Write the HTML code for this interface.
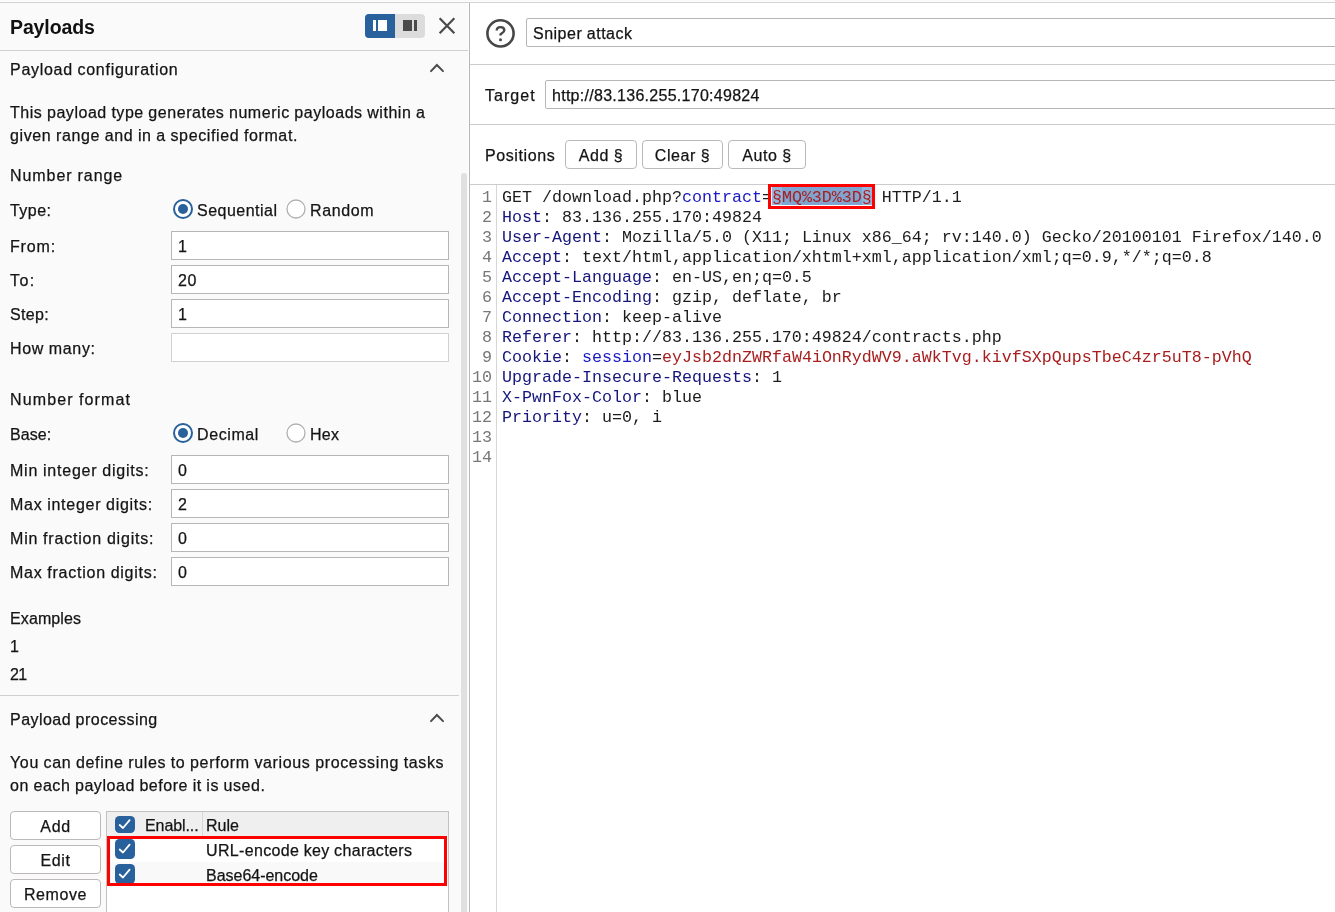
<!DOCTYPE html>
<html><head><meta charset="utf-8">
<style>
*{box-sizing:border-box;margin:0;padding:0}
html,body{width:1335px;height:912px;overflow:hidden;background:#fafafa}
body{position:relative;font-family:"Liberation Sans",sans-serif;font-size:16px;color:#141414}
.t{-webkit-text-stroke:0.25px currentColor}
#root{position:absolute;left:0;top:0;width:1335px;height:912px;will-change:transform}
.a{position:absolute;white-space:pre;line-height:18px}
.t{word-spacing:-0.4px}
.hl{position:absolute;height:1px;background:#cccccc}
.vl{position:absolute;width:1px;background:#cccccc}
.inp{position:absolute;background:#fff;border:1px solid #b9b5b5;border-radius:2px}
.btn{position:absolute;background:#fff;border:1px solid #bdb9b9;border-radius:4px}
.mono{font-family:"Liberation Mono",monospace;font-size:16.67px;line-height:20px}
.k{color:#15157d}
.p{color:#1818c4}
.r{color:#a81e1e}
.ln{position:absolute;left:470px;width:22px;text-align:right;color:#777}
</style></head><body><div id="root">
<div class="hl" style="left:0;top:1px;width:1335px;background:#fdfdfd"></div>
<div class="hl" style="left:0;top:2px;width:1335px;background:#cfd3d3"></div>
<div class="a" style="left:0;top:3px;width:469px;height:909px;background:#fafafa"></div>
<div id="payloads" class="a t" style="left:10px;top:18px;letter-spacing:-0.114px;font-size:19.5px;font-weight:bold;color:#111;-webkit-text-stroke:0">Payloads</div>
<div class="a" style="left:365px;top:14px;width:60px;height:24px;border-radius:4px;background:#dcdcdc;overflow:hidden">
  <div class="a" style="left:0;top:0;width:30px;height:24px;background:#28619b"></div>
  <div class="a" style="left:8px;top:6px;width:3px;height:11px;background:#fff"></div>
  <div class="a" style="left:12.5px;top:6px;width:9.5px;height:11px;background:#fff"></div>
  <div class="a" style="left:38px;top:6px;width:9px;height:11px;background:#4a4a4a"></div>
  <div class="a" style="left:49px;top:6px;width:3px;height:11px;background:#4a4a4a"></div>
</div>
<svg class="a" style="left:437px;top:16px" width="20" height="20" viewBox="0 0 20 20"><path d="M3.4 3 L16.6 16.4 M16.6 3 L3.4 16.4" stroke="#4a4a4a" stroke-width="2.2" stroke-linecap="square"/></svg>
<div class="hl" style="left:0;top:50px;width:469px;background:#cfcfcf"></div>
<div class="a" style="left:468px;top:3px;width:1px;height:909px;background:#fff"></div>
<div class="a" style="left:461px;top:173px;width:6px;height:739px;border-radius:3px 3px 0 0;background:#e0e0e0"></div>
<div id="cfg" class="a t" style="left:10px;top:60.5px;letter-spacing:0.71px;">Payload configuration</div>
<svg class="a" style="left:426px;top:60px" width="20" height="14" viewBox="0 0 20 14"><path d="M5 11.1 L10.9 5 L17 11.1" fill="none" stroke="#4a4a4a" stroke-width="2" stroke-linecap="round"/></svg>
<div id="para1" class="a t" style="left:10px;top:103.5px;letter-spacing:0.54px;">This payload type generates numeric payloads within a</div>
<div id="para2" class="a t" style="left:10px;top:126.5px;letter-spacing:0.621px;">given range and in a specified format.</div>
<div id="nrange" class="a t" style="left:10px;top:166.5px;letter-spacing:0.944px;">Number range</div>
<div id="type" class="a t" style="left:10px;top:201.5px;letter-spacing:0.45px;">Type:</div>
<svg class="a" style="left:172px;top:198px" width="22" height="22" viewBox="0 0 22 22"><circle cx="11" cy="11" r="9" fill="#fff" stroke="#28619b" stroke-width="2"/><circle cx="11" cy="11" r="5" fill="#28619b"/></svg>
<div id="seq" class="a t" style="left:197px;top:201.5px;letter-spacing:0.489px;">Sequential</div>
<svg class="a" style="left:285px;top:198px" width="22" height="22" viewBox="0 0 22 22"><circle cx="11" cy="11" r="9" fill="#fff" stroke="#b0b0b0" stroke-width="1.3"/></svg>
<div id="rand" class="a t" style="left:310px;top:201.5px;letter-spacing:0.6px;">Random</div>
<div id="from" class="a t" style="left:10px;top:237.5px;letter-spacing:0.85px;">From:</div>
<div class="inp" style="left:171px;top:231px;width:278px;height:29px;border-radius:0.5px;"></div>
<div id="from_v" class="a t" style="left:178px;top:237.5px;letter-spacing:0.6px;">1</div>
<div id="to" class="a t" style="left:10px;top:271.5px;letter-spacing:1.4px;">To:</div>
<div class="inp" style="left:171px;top:265px;width:278px;height:29px;border-radius:0.5px;"></div>
<div id="to_v" class="a t" style="left:178px;top:271.5px;letter-spacing:0.6px;">20</div>
<div id="step" class="a t" style="left:10px;top:305.5px;letter-spacing:0.35px;">Step:</div>
<div class="inp" style="left:171px;top:299px;width:278px;height:29px;border-radius:0.5px;"></div>
<div id="step_v" class="a t" style="left:178px;top:305.5px;letter-spacing:0.6px;">1</div>
<div id="howmany" class="a t" style="left:10px;top:339.5px;letter-spacing:0.672px;">How many:</div>
<div class="inp" style="left:171px;top:333px;width:278px;height:29px;border-radius:0.5px;border-color:#d4d0d0"></div>
<div id="nformat" class="a t" style="left:10px;top:390.5px;letter-spacing:1.132px;">Number format</div>
<div id="base" class="a t" style="left:10px;top:425.5px;letter-spacing:0.1px;">Base:</div>
<svg class="a" style="left:172px;top:422px" width="22" height="22" viewBox="0 0 22 22"><circle cx="11" cy="11" r="9" fill="#fff" stroke="#28619b" stroke-width="2"/><circle cx="11" cy="11" r="5" fill="#28619b"/></svg>
<div id="dec" class="a t" style="left:197px;top:425.5px;letter-spacing:0.6px;">Decimal</div>
<svg class="a" style="left:285px;top:422px" width="22" height="22" viewBox="0 0 22 22"><circle cx="11" cy="11" r="9" fill="#fff" stroke="#b0b0b0" stroke-width="1.3"/></svg>
<div id="hex" class="a t" style="left:310px;top:425.5px;letter-spacing:0.3px;">Hex</div>
<div id="minint" class="a t" style="left:10px;top:461.5px;letter-spacing:0.789px;">Min integer digits:</div>
<div class="inp" style="left:171px;top:455px;width:278px;height:29px;border-radius:0.5px;"></div>
<div id="minint_v" class="a t" style="left:178px;top:461.5px;letter-spacing:0.6px;">0</div>
<div id="maxint" class="a t" style="left:10px;top:495.5px;letter-spacing:0.731px;">Max integer digits:</div>
<div class="inp" style="left:171px;top:489px;width:278px;height:29px;border-radius:0.5px;"></div>
<div id="maxint_v" class="a t" style="left:178px;top:495.5px;letter-spacing:0.6px;">2</div>
<div id="minfr" class="a t" style="left:10px;top:529.5px;letter-spacing:0.811px;">Min fraction digits:</div>
<div class="inp" style="left:171px;top:523px;width:278px;height:29px;border-radius:0.5px;"></div>
<div id="minfr_v" class="a t" style="left:178px;top:529.5px;letter-spacing:0.6px;">0</div>
<div id="maxfr" class="a t" style="left:10px;top:563.5px;letter-spacing:0.758px;">Max fraction digits:</div>
<div class="inp" style="left:171px;top:557px;width:278px;height:29px;border-radius:0.5px;"></div>
<div id="maxfr_v" class="a t" style="left:178px;top:563.5px;letter-spacing:0.6px;">0</div>
<div id="examples" class="a t" style="left:10px;top:609.5px;letter-spacing:0.113px;">Examples</div>
<div id="ex1" class="a t" style="left:10px;top:637.5px;letter-spacing:0.6px;">1</div>
<div id="ex2" class="a t" style="left:10px;top:665.5px;letter-spacing:-0.6px;">21</div>
<div class="hl" style="left:0;top:695px;width:459px;background:#d0d0d0"></div>
<div id="proc" class="a t" style="left:10px;top:710.5px;letter-spacing:0.469px;">Payload processing</div>
<svg class="a" style="left:426px;top:710.3px" width="20" height="14" viewBox="0 0 20 14"><path d="M5 11.1 L10.9 5 L17 11.1" fill="none" stroke="#4a4a4a" stroke-width="2" stroke-linecap="round"/></svg>
<div id="para3" class="a t" style="left:10px;top:754px;letter-spacing:0.643px;">You can define rules to perform various processing tasks</div>
<div id="para4" class="a t" style="left:10px;top:777px;letter-spacing:0.546px;">on each payload before it is used.</div>
<div class="btn" style="left:10px;top:811px;width:91px;height:29px"></div>
<div id="badd" class="a t" style="left:10px;top:817.5px;letter-spacing:0.6px;width:91px;text-align:center">Add</div>
<div class="btn" style="left:10px;top:845px;width:91px;height:29px"></div>
<div id="bedit" class="a t" style="left:10px;top:851.5px;letter-spacing:0.6px;width:91px;text-align:center">Edit</div>
<div class="btn" style="left:10px;top:879px;width:91px;height:29px"></div>
<div id="brem" class="a t" style="left:10px;top:885.5px;letter-spacing:0.6px;width:91px;text-align:center">Remove</div>
<div class="a" style="left:106px;top:811px;width:343px;height:101px;background:#fff;border:1px solid #c4c0c0;border-bottom:none"></div>
<div class="a" style="left:107px;top:812px;width:341px;height:24px;background:#efefef"></div>
<div class="vl" style="left:202px;top:812px;height:24px;background:#d8d8d8"></div>
<div class="a" style="left:107px;top:862px;width:341px;height:24px;background:#f9f9f9"></div>
<svg class="a" style="left:115px;top:816px" width="20" height="17" viewBox="0 0 20 17"><rect x="0" y="0" width="20" height="17" rx="4.5" fill="#28619b"/><path d="M4.7 9.0 L8 12.0 L14.6 4.2" fill="none" stroke="#fff" stroke-width="1.8" stroke-linecap="round" stroke-linejoin="round"/></svg>
<div id="enabl" class="a t" style="left:145px;top:817px;letter-spacing:-0.086px;">Enabl...</div>
<div id="rule" class="a t" style="left:206px;top:817px;letter-spacing:0.0px;">Rule</div>
<svg class="a" style="left:115px;top:839px" width="20" height="20" viewBox="0 0 20 20"><rect x="0" y="0" width="20" height="20" rx="4.5" fill="#28619b"/><path d="M4.7 10.5 L8 13.5 L14.6 5.7" fill="none" stroke="#fff" stroke-width="1.8" stroke-linecap="round" stroke-linejoin="round"/></svg>
<div id="urlenc" class="a t" style="left:206px;top:842px;letter-spacing:0.35px;">URL-encode key characters</div>
<svg class="a" style="left:115px;top:864px" width="20" height="20" viewBox="0 0 20 20"><rect x="0" y="0" width="20" height="20" rx="4.5" fill="#28619b"/><path d="M4.7 10.5 L8 13.5 L14.6 5.7" fill="none" stroke="#fff" stroke-width="1.8" stroke-linecap="round" stroke-linejoin="round"/></svg>
<div id="b64" class="a t" style="left:206px;top:867px;letter-spacing:-0.016px;">Base64-encode</div>
<div class="a" style="left:107px;top:836px;width:340px;height:50px;border:3px solid #ff0000"></div>
<div class="vl" style="left:469px;top:3px;height:909px;background:#bab6b6"></div>
<div class="a" style="left:470px;top:3px;width:865px;height:909px;background:#fff"></div>
<svg class="a" style="left:485px;top:18px" width="31" height="31" viewBox="0 0 31 31"><circle cx="15.5" cy="15.4" r="13.1" fill="none" stroke="#474747" stroke-width="2.6"/><path d="M11.7 12.6 C11.7 10.3 13.4 9.1 15.5 9.1 C17.7 9.1 19.3 10.4 19.3 12.3 C19.3 14.5 16.9 15.1 15.5 16.4 L15.5 17.6" fill="none" stroke="#474747" stroke-width="2.4"/><circle cx="15.5" cy="21.8" r="1.5" fill="#474747"/></svg>
<div class="inp" style="left:526px;top:18px;width:820px;height:29px;"></div>
<div id="sniper" class="a t" style="left:533px;top:25px;letter-spacing:0.499px;">Sniper attack</div>
<div class="hl" style="left:470px;top:64px;width:865px"></div>
<div id="target" class="a t" style="left:485px;top:86.5px;letter-spacing:1.04px;">Target</div>
<div class="inp" style="left:545px;top:80px;width:800px;height:29px;"></div>
<div id="url" class="a t" style="left:552px;top:86.5px;letter-spacing:0.278px;">http://83.136.255.170:49824</div>
<div class="hl" style="left:470px;top:124px;width:865px"></div>
<div id="positions" class="a t" style="left:485px;top:146.5px;letter-spacing:0.6px;">Positions</div>
<div class="btn" style="left:565px;top:140px;width:72px;height:29px"></div>
<div id="badd2" class="a t" style="left:565px;top:146.5px;letter-spacing:0.6px;width:72px;text-align:center">Add §</div>
<div class="btn" style="left:642px;top:140px;width:81px;height:29px"></div>
<div id="bclear" class="a t" style="left:642px;top:146.5px;letter-spacing:0.6px;width:81px;text-align:center">Clear §</div>
<div class="btn" style="left:728px;top:140px;width:78px;height:29px"></div>
<div id="bauto" class="a t" style="left:728px;top:146.5px;letter-spacing:0.6px;width:78px;text-align:center">Auto §</div>
<div class="hl" style="left:470px;top:184px;width:865px"></div>
<div class="vl" style="left:496px;top:185px;height:727px;background:#d6d6d6"></div>
<div class="a" style="left:772px;top:187px;width:100px;height:18px;background:#7ea4cf"></div>
<div class="a" style="left:772px;top:187px;width:10px;height:18px;background:#93b5dc"></div>
<div class="a" style="left:862px;top:187px;width:10px;height:18px;background:#93b5dc"></div>
<div class="a mono" style="left:0;top:188px">
<div class="ln" style="top:0px">1</div><div class="ln" style="top:20px">2</div><div class="ln" style="top:40px">3</div><div class="ln" style="top:60px">4</div><div class="ln" style="top:80px">5</div><div class="ln" style="top:100px">6</div><div class="ln" style="top:120px">7</div><div class="ln" style="top:140px">8</div><div class="ln" style="top:160px">9</div><div class="ln" style="top:180px">10</div><div class="ln" style="top:200px">11</div><div class="ln" style="top:220px">12</div><div class="ln" style="top:240px">13</div><div class="ln" style="top:260px">14</div>
</div>
<div class="a mono" style="left:502px;top:188px;color:#1c1c1c">GET /download.php?<span class="p">contract</span>=<span class="r">§MQ%3D%3D§</span> HTTP/1.1
<span class="k">Host</span>: 83.136.255.170:49824
<span class="k">User-Agent</span>: Mozilla/5.0 (X11; Linux x86_64; rv:140.0) Gecko/20100101 Firefox/140.0
<span class="k">Accept</span>: text/html,application/xhtml+xml,application/xml;q=0.9,*/*;q=0.8
<span class="k">Accept-Language</span>: en-US,en;q=0.5
<span class="k">Accept-Encoding</span>: gzip, deflate, br
<span class="k">Connection</span>: keep-alive
<span class="k">Referer</span>: http://83.136.255.170:49824/contracts.php
<span class="k">Cookie</span>: <span class="p">session</span>=<span class="r">eyJsb2dnZWRfaW4iOnRydWV9.aWkTvg.kivfSXpQupsTbeC4zr5uT8-pVhQ</span>
<span class="k">Upgrade-Insecure-Requests</span>: 1
<span class="k">X-PwnFox-Color</span>: blue
<span class="k">Priority</span>: u=0, i
</div>
<div class="a" style="left:768px;top:184px;width:107px;height:24.5px;border:3px solid #ff0000"></div>
</div></body></html>
